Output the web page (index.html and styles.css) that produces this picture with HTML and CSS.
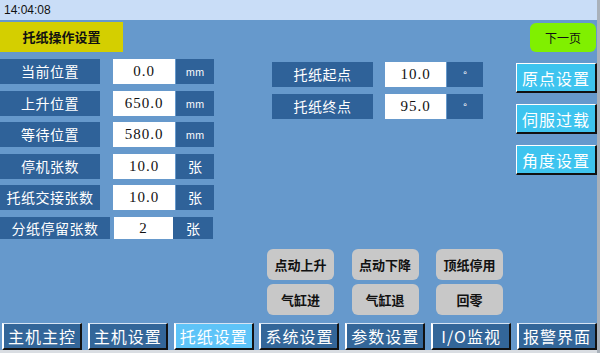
FILE: index.html
```html
<!DOCTYPE html>
<html lang="zh-CN">
<head>
    <meta charset="UTF-8">
    <title>托纸操作设置</title>
    <link rel="stylesheet" href="styles.css">
</head>
<body>
    <div class="screen">
        <div class="topbar">14:04:08</div>
        <div class="content">
            <div class="left">
                <div class="title">托纸操作设置</div>
                <div class="rows">
                    <div class="row"><div class="label">当前位置</div><div class="value">0.0</div><div class="unit small">mm</div></div>
                    <div class="row"><div class="label">上升位置</div><div class="value">650.0</div><div class="unit small">mm</div></div>
                    <div class="row"><div class="label">等待位置</div><div class="value">580.0</div><div class="unit small">mm</div></div>
                    <div class="row"><div class="label">停机张数</div><div class="value">10.0</div><div class="unit">张</div></div>
                    <div class="row"><div class="label">托纸交接张数</div><div class="value">10.0</div><div class="unit">张</div></div>
                    <div class="row last"><div class="label">分纸停留张数</div><div class="value">2</div><div class="unit">张</div></div>
                </div>
            </div>
            <div class="mid">
                <div class="params">
                    <div class="row"><div class="label">托纸起点</div><div class="value">10.0</div><div class="unit small">°</div></div>
                    <div class="row"><div class="label">托纸终点</div><div class="value">95.0</div><div class="unit small">°</div></div>
                </div>
                <div class="actions">
                    <button class="grey-btn">点动上升</button>
                    <button class="grey-btn">点动下降</button>
                    <button class="grey-btn">顶纸停用</button>
                    <button class="grey-btn">气缸进</button>
                    <button class="grey-btn">气缸退</button>
                    <button class="grey-btn">回零</button>
                </div>
            </div>
            <div class="right">
                <button class="next-btn">下一页</button>
                <button class="cyan-btn">原点设置</button>
                <button class="cyan-btn">伺服过载</button>
                <button class="cyan-btn">角度设置</button>
            </div>
        </div>
        <div class="tabs">
            <div class="tab">主机主控</div>
            <div class="tab">主机设置</div>
            <div class="tab active">托纸设置</div>
            <div class="tab">系统设置</div>
            <div class="tab">参数设置</div>
            <div class="tab">I/O监视</div>
            <div class="tab">报警界面</div>
        </div>
        <div class="bottom-strip"></div>
    </div>
</body>
</html>
```
FILE: styles.css
```css
body {
    margin: 0;
    padding: 0;
    font-family: "Noto Sans CJK SC", sans-serif;
    overflow: hidden;
}
.screen {
    width: 600px;
    height: 353px;
    box-sizing: border-box;
    border-right: 3px solid #a9b1ba;
    background-color: #6699cc;
    display: flex;
    flex-direction: column;
}
.topbar {
    height: 20px;
    line-height: 20px;
    padding-left: 4px;
    background-color: #c9ddf7;
    font-family: "Liberation Sans", sans-serif;
    font-size: 12px;
    color: #111;
}
.content {
    flex: 1;
    display: flex;
}
/* left column */
.left {
    width: 260px;
    padding-top: 2px;
}
.title {
    width: 123px;
    height: 30px;
    line-height: 30px;
    text-align: center;
    background-color: #d4cf00;
    color: #111;
    font-size: 13px;
    font-weight: bold;
}
.rows {
    margin-top: 7px;
    display: flex;
    flex-direction: column;
    gap: 6.5px;
}
.row {
    display: flex;
    height: 25px;
}
.label {
    width: 100px;
    background-color: #2f6299;
    color: #fff;
    font-size: 14px;
    letter-spacing: 0.5px;
    line-height: 25px;
    text-align: center;
}
.value {
    width: 62px;
    margin-left: 13px;
    background-color: #fff;
    color: #111;
    font-family: "Liberation Serif", serif;
    font-size: 15px;
    letter-spacing: 1px;
    line-height: 25px;
    text-align: center;
}
.unit {
    width: 38px;
    margin-left: 1px;
    background-color: #2f6299;
    color: #fff;
    font-size: 14px;
    line-height: 25px;
    text-align: center;
}
.unit.small {
    font-size: 10px;
}
.row.last {
    height: 22px;
}
.row.last .label {
    width: 110px;
    line-height: 22px;
}
.row.last .value {
    width: 59px;
    margin-left: 4px;
    line-height: 22px;
}
.row.last .unit {
    width: 40px;
    margin-left: 0;
    line-height: 22px;
}
/* middle column */
.mid {
    width: 256px;
    display: flex;
    flex-direction: column;
}
.params {
    margin-top: 42px;
    margin-left: 12px;
    display: flex;
    flex-direction: column;
    gap: 7px;
}
.params .label {
    width: 101px;
}
.params .value {
    width: 61px;
    margin-left: 12px;
}
.params .unit {
    width: 36px;
}
.actions {
    margin-top: auto;
    margin-bottom: 5px;
    margin-left: 7px;
    display: grid;
    grid-template-columns: 67px 67px 67px;
    column-gap: 17.5px;
    row-gap: 4px;
}
.grey-btn {
    height: 31px;
    border: none;
    border-radius: 6px;
    background-color: #c8c8c8;
    color: #111;
    font-family: "Noto Sans CJK SC", sans-serif;
    font-size: 13px;
    font-weight: bold;
    padding: 0;
}
/* right column */
.right {
    width: 81px;
    display: flex;
    flex-direction: column;
}
.next-btn {
    margin-top: 3px;
    margin-left: 14px;
    width: 66px;
    height: 29px;
    border: none;
    border-radius: 6px;
    background-color: #80f000;
    color: #111;
    font-family: "Noto Sans CJK SC", sans-serif;
    font-size: 12px;
    padding: 0;
}
.cyan-btn {
    margin-top: 11px;
    width: 81px;
    height: 30px;
    box-sizing: border-box;
    border-style: solid;
    border-width: 1px 2px 2px 1px;
    border-color: #fff #111 #111 #fff;
    background-color: #3ec4ef;
    color: #fff;
    font-family: "Noto Sans CJK SC", sans-serif;
    font-size: 16px;
    letter-spacing: 1px;
    padding: 0;
}
/* bottom tabs */
.tabs {
    height: 30px;
    padding: 3px 0 0 2px;
    box-sizing: border-box;
    display: flex;
    justify-content: space-between;
}
.tab {
    width: 80px;
    height: 27px;
    box-sizing: border-box;
    border-style: solid;
    border-width: 1px 2px 2px 2px;
    border-color: #d6e4f4 #111 #111 #fff;
    background-color: #336699;
    color: #fff;
    font-size: 16px;
    letter-spacing: 1px;
    line-height: 24px;
    text-align: center;
}
.tab.active {
    background-color: #5ec4f8;
}
.bottom-strip {
    height: 3px;
    background-color: #d9dde2;
}
```
